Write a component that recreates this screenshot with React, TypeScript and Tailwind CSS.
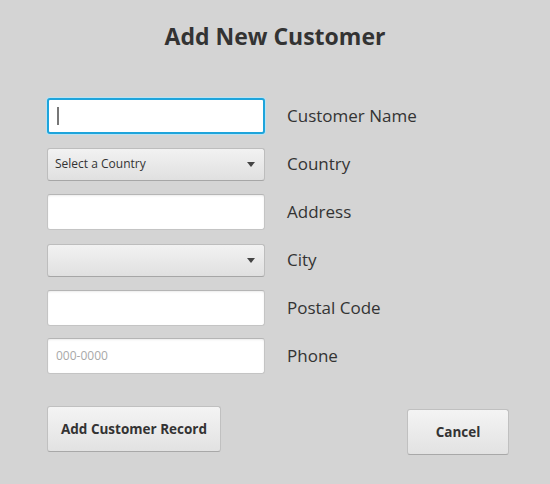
import type { ReactNode } from "react";

// ─── Pieces ──────────────────────────────────────────────────────────────────

function TextBox({ focused, placeholder }: { focused?: boolean; placeholder?: string }) {
    return (
        <div
            className={`w-[218px] h-[36px] bg-white rounded-[3px] flex items-center px-[8px] ${
                focused
                    ? "border-2 border-[#1ea4db] shadow-[0_0_0_1px_#b8e2f3]"
                    : "border border-[#c4c4c4] border-t-[#b5b5b5] shadow-[inset_0_1px_2px_rgba(0,0,0,0.08)]"
            }`}
        >
            {focused && <span className="w-[2px] h-[18px] bg-[#777]" />}
            {placeholder && <span className="text-[12px] text-[#a8a8a8]">{placeholder}</span>}
        </div>
    );
}

function Combo({ text }: { text?: string }) {
    return (
        <div className="w-[218px] h-[33px] rounded-[3px] border border-[#bdbdbd] border-b-[#a6a6a6] bg-gradient-to-b from-[#f2f2f2] to-[#e0e0e0] flex items-center justify-between pl-[7px] pr-[9px]">
            <span className="text-[12px] text-[#333]">{text}</span>
            <svg width="8" height="5" viewBox="0 0 8 5">
                <path d="M0 0h8L4 5z" fill="#444" />
            </svg>
        </div>
    );
}

function Row({ label, children }: { label: string; children: ReactNode }) {
    return (
        <div className="flex items-center h-[36px] gap-[22px]">
            {children}
            <span className="text-[17px] text-[#333]">{label}</span>
        </div>
    );
}

function Button({ children, className }: { children: ReactNode; className: string }) {
    return (
        <button
            className={`h-[46px] rounded-[3px] border border-[#c0c0c0] border-b-[#a8a8a8] bg-gradient-to-b from-[#f4f4f4] to-[#e2e2e2] text-[13.5px] font-bold text-[#333] ${className}`}
        >
            {children}
        </button>
    );
}

// ─── Main component ───────────────────────────────────────────────────────────

export default function App() {
    return (
        <div
            className="w-[550px] h-[484px] bg-[#d4d4d4] flex flex-col"
            style={{ fontFamily: '"Open Sans", "Noto Sans", sans-serif' }}
        >
            <h1 className="text-center text-[23px] font-bold text-[#333] pt-[19px] leading-[34px]">
                Add New Customer
            </h1>

            <div className="flex flex-col gap-[12px] pl-[47px] mt-[45px]">
                <Row label="Customer Name">
                    <TextBox focused />
                </Row>
                <Row label="Country">
                    <Combo text="Select a Country" />
                </Row>
                <Row label="Address">
                    <TextBox />
                </Row>
                <Row label="City">
                    <Combo />
                </Row>
                <Row label="Postal Code">
                    <TextBox />
                </Row>
                <Row label="Phone">
                    <TextBox placeholder="000-0000" />
                </Row>
            </div>

            <div className="flex items-start justify-between pl-[47px] pr-[41px] mt-[32px]">
                <Button className="w-[174px]">Add Customer Record</Button>
                <Button className="w-[102px] mt-[3px]">Cancel</Button>
            </div>
        </div>
    );
}
